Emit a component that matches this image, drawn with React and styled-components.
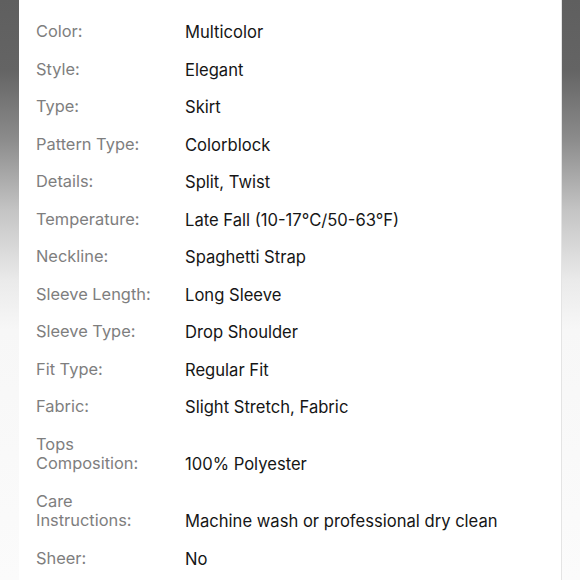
import React from 'react';
import styled, { createGlobalStyle } from 'styled-components';

const GlobalStyle = createGlobalStyle`
    html, body {
        margin: 0;
        padding: 0;
        height: 580px;
        overflow: hidden;
    }
    body {
        background: linear-gradient(to bottom, #5f5f5f 0px, #646464 70px, #8c8c8c 140px, #c4c4c4 210px, #eaeaea 280px, #f7f7f7 330px, #fbfbfb 580px);
        font-family: Inter, "Liberation Sans", sans-serif;
    }
`;

const Page = styled.div`
    display: flex;
    height: 580px;
    padding: 0 18px 0 19px;
    box-sizing: border-box;
`;

const Card = styled.div`
    flex: 1;
    background: #ffffff;
    border-right: 1px solid #e4e4e4;
    padding: 22px 0 0 17px;
    box-sizing: border-box;
`;

const Specs = styled.dl`
    display: grid;
    grid-template-columns: 125px 1fr;
    column-gap: 24px;
    row-gap: 18px;
    align-items: end;
    margin: 0;
`;

const Label = styled.dt`
    font-size: 16.4px;
    line-height: 19.5px;
    color: #7e7e7e;
    margin: 0;
`;

const Value = styled.dd`
    font-size: 16.6px;
    line-height: 19.5px;
    color: #161616;
    margin: 0;
    position: relative;
    top: 1px;
`;

const specs = [
    ['Color:', 'Multicolor'],
    ['Style:', 'Elegant'],
    ['Type:', 'Skirt'],
    ['Pattern Type:', 'Colorblock'],
    ['Details:', 'Split, Twist'],
    ['Temperature:', 'Late Fall (10-17°C/50-63°F)'],
    ['Neckline:', 'Spaghetti Strap'],
    ['Sleeve Length:', 'Long Sleeve'],
    ['Sleeve Type:', 'Drop Shoulder'],
    ['Fit Type:', 'Regular Fit'],
    ['Fabric:', 'Slight Stretch, Fabric'],
    ['Tops Composition:', '100% Polyester'],
    ['Care Instructions:', 'Machine wash or professional dry clean'],
    ['Sheer:', 'No'],
];

const App = () => {
    return (
        <>
            <GlobalStyle />
            <Page>
                <Card>
                    <Specs>
                        {specs.map(([label, value]) => (
                            <React.Fragment key={label}>
                                <Label>{label}</Label>
                                <Value>{value}</Value>
                            </React.Fragment>
                        ))}
                    </Specs>
                </Card>
            </Page>
        </>
    );
};

export default App;
